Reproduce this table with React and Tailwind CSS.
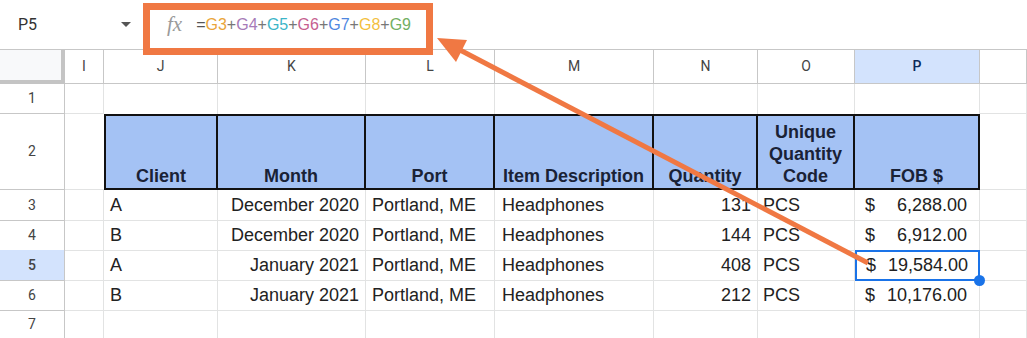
import React from "react";

const cols = "grid grid-cols-[65px_39px_114px_148px_129px_159px_104px_97px_125px_1fr]";
const cell = "border-r border-b border-[#e2e3e3] overflow-hidden whitespace-nowrap";
const rowHead =
  "flex items-center justify-center border-r border-b border-[#c7c7c7] text-[14px] text-[#444] font-['Roboto',sans-serif]";

const data = [
  { n: 3, client: "A", month: "December 2020", qty: "131", fob: "6,288.00" },
  { n: 4, client: "B", month: "December 2020", qty: "144", fob: "6,912.00" },
  { n: 5, client: "A", month: "January 2021", qty: "408", fob: "19,584.00" },
  { n: 6, client: "B", month: "January 2021", qty: "212", fob: "10,176.00" },
];

const formula = [
  ["=", "text-[#555]"],
  ["G3", "text-[#eaa53a]"],
  ["+", "text-[#777]"],
  ["G4", "text-[#a67bb8]"],
  ["+", "text-[#777]"],
  ["G5", "text-[#3cb5c8]"],
  ["+", "text-[#777]"],
  ["G6", "text-[#c65f90]"],
  ["+", "text-[#777]"],
  ["G7", "text-[#4f87e0]"],
  ["+", "text-[#777]"],
  ["G8", "text-[#f3bf3f]"],
  ["+", "text-[#777]"],
  ["G9", "text-[#72af63]"],
];

const letters = ["I", "J", "K", "L", "M", "N", "O", "P", ""];

const headers = [
  ["Client"],
  ["Month"],
  ["Port"],
  ["Item Description"],
  ["Quantity"],
  ["Unique", "Quantity", "Code"],
  ["FOB $"],
];

export default function App() {
  return (
    <div className="relative h-[338px] w-[1027px] overflow-hidden bg-white font-['Liberation_Sans',Arial,sans-serif] text-[#222]">
      {/* formula bar */}
      <div className="flex h-[50px] items-center border-b border-[#c7c7c7]">
        <div className="flex w-[143px] items-center justify-between pl-[18px] pr-[12px] font-['Roboto',sans-serif] text-[16px] text-[#333]">
          <span>P5</span>
          <span className="h-0 w-0 border-x-[5px] border-t-[5px] border-x-transparent border-t-[#555]" />
        </div>
        <span className="ml-[24px] font-['Liberation_Serif',serif] text-[21px] italic text-[#9a9a9a]">
          fx
        </span>
        <span className="ml-[14px] text-[16px]">
          {formula.map(([t, c], i) => (
            <span key={i} className={c}>
              {t}
            </span>
          ))}
        </span>
      </div>

      {/* column letters */}
      <div className={`${cols} h-[34px]`}>
        <div className="border-r-[4px] border-b-[4px] border-[#c4c4c4] bg-[#f8f9fa]" />
        {letters.map((l, i) => (
          <div
            key={i}
            className={`flex items-center justify-center border-r border-b border-[#c7c7c7] font-['Roboto',sans-serif] text-[14px] ${
              l === "P" ? "bg-[#d3e3fd] font-medium text-[#0b2a5b]" : "text-[#444]"
            }`}
          >
            {l}
          </div>
        ))}
      </div>

      {/* row 1 */}
      <div className={`${cols} h-[30px]`}>
        <div className={rowHead}>1</div>
        {letters.map((_, i) => (
          <div key={i} className={`${cell} ${i >= 1 && i <= 7 ? "border-b-0" : ""}`} />
        ))}
      </div>

      {/* row 2 - table headers */}
      <div className={`${cols} h-[76px]`}>
        <div className={rowHead}>2</div>
        <div className="border-b border-[#e2e3e3]" />
        {headers.map((h, i) => (
          <div
            key={i}
            className={`flex flex-col items-center justify-end border-y-2 border-r-2 border-[#111] bg-[#a4c2f4] pb-[1px] text-[18px] leading-[22px] font-bold text-[#1a2236] ${
              i === 0 ? "border-l-2" : ""
            }`}
          >
            {h.map((line) => (
              <span key={line}>{line}</span>
            ))}
          </div>
        ))}
        <div className={cell} />
      </div>

      {/* data rows */}
      {data.map((r) => {
        const sel = r.n === 5;
        return (
          <div key={r.n} className={`${cols} h-[30px] text-[18px] leading-[30px]`}>
            <div className={`${rowHead} ${sel ? "bg-[#d3e3fd] font-medium text-[#0b2a5b]" : ""}`}>
              {r.n}
            </div>
            <div className={cell} />
            <div className={`${cell} pl-[6px]`}>{r.client}</div>
            <div className={`${cell} pr-[6px] text-right`}>{r.month}</div>
            <div className={`${cell} pl-[6px]`}>Portland, ME</div>
            <div className={`${cell} pl-[7px]`}>Headphones</div>
            <div className={`${cell} pr-[6px] text-right`}>{r.qty}</div>
            <div className={`${cell} pl-[5px]`}>PCS</div>
            {sel ? (
              <div className="relative z-10 flex justify-between whitespace-nowrap border-2 border-[#1a73e8] pl-[9px] pr-[10px] leading-[26px]">
                <span>$</span>
                <span>{r.fob}</span>
                <span className="absolute -bottom-[7px] -right-[7px] block h-[11px] w-[11px] rounded-full bg-[#1a73e8]" />
              </div>
            ) : (
              <div className={`${cell} flex justify-between pl-[10px] pr-[12px]`}>
                <span>$</span>
                <span>{r.fob}</span>
              </div>
            )}
            <div className={cell} />
          </div>
        );
      })}

      {/* row 7 */}
      <div className={`${cols} h-[30px]`}>
        <div className={rowHead}>7</div>
        {letters.map((_, i) => (
          <div key={i} className={cell} />
        ))}
      </div>

      {/* annotation overlays */}
      <div className="pointer-events-none absolute left-[143px] top-[3px] h-[52px] w-[290px] border-[7px] border-[#f07843]" />
      <svg className="pointer-events-none absolute left-0 top-0 z-20" width="1027" height="338">
        <line x1="868" y1="263" x2="460" y2="50" stroke="#f07843" strokeWidth="5" />
        <polygon points="437,38 467,40 456,62" fill="#f07843" />
      </svg>
    </div>
  );
}
